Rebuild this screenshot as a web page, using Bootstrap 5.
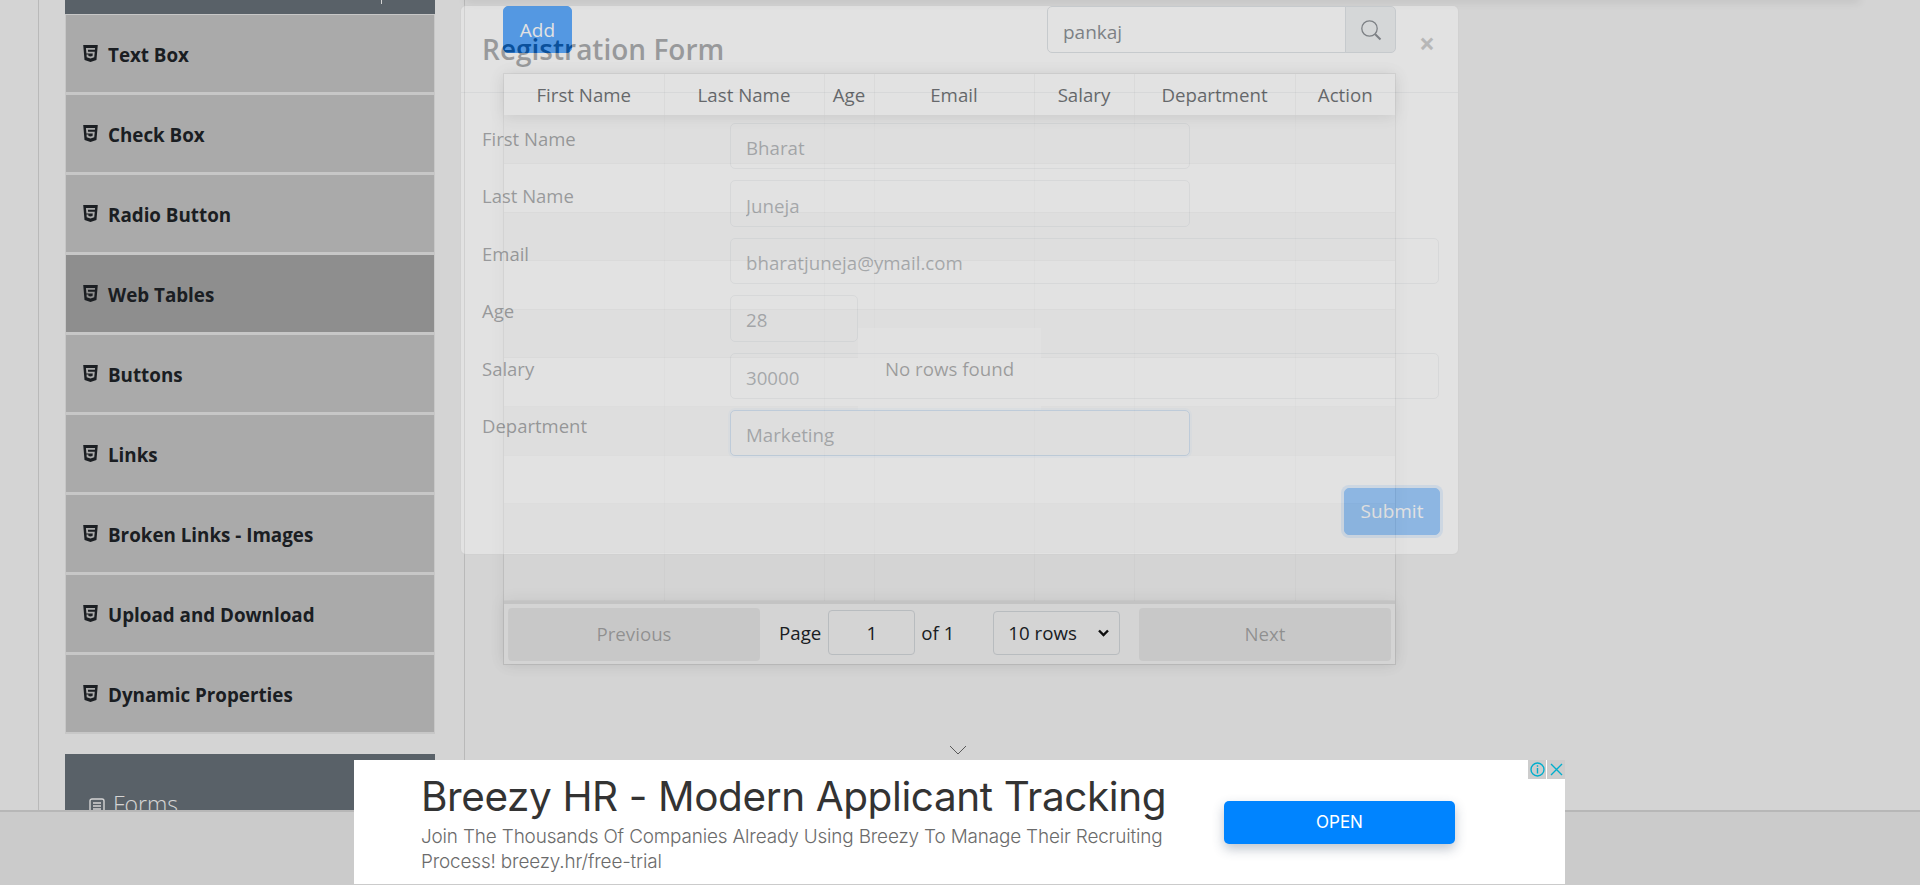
<!DOCTYPE html>
<html lang="en">
<head>
<meta charset="utf-8">
<title>Web Tables</title>
<link rel="stylesheet" href="https://cdn.jsdelivr.net/npm/bootstrap@5.3.0/dist/css/bootstrap.min.css">
<style>
html,body{height:885px;overflow:hidden}
body{font-family:"Open Sans","Noto Sans",sans-serif;font-size:18px;color:#212529;background:#fff;position:relative}
.shell{height:885px;display:flex;flex-direction:column}
.work{height:810px;overflow:hidden;display:flex;flex:none}
.side{width:427px;margin-left:38px;border-left:1px solid #dfdfdf;border-right:1px solid #dfdfdf;padding:0 29px 0 26px;flex:none}
.grp-dark{background:#6c757d;color:#fff}
.grp-top{height:14px;position:relative}
.grp-tick{position:absolute;left:316px;top:0;width:1px;height:4px;background:#fff}
.menu-item{height:80px;background:#cdcdcd;border:1px solid #f0f0f0;border-bottom-width:2px;font-weight:700;font-size:18.8px;color:#212529;display:flex;align-items:center;padding:4px 0 0 17px;gap:10px;line-height:1}
.menu-item.on{background:#ababab}
.menu-item svg{width:15px;height:17px;fill:#212529;margin-top:-4px;flex:none}
.grp-forms{margin-top:20px;height:80px;padding:30px 0 0 24px;font-size:23px;font-weight:300;line-height:40px;display:flex;gap:8px;align-items:flex-start}
.grp-forms svg{margin-top:14px;flex:none}
.main{flex:1;padding:6px 0 0 38px;position:relative}
.top-shade{position:absolute;left:0;top:-10px;width:1395px;height:10px;box-shadow:0 3px 8px rgba(0,0,0,.08)}
.top-row{width:893px;height:47px;display:flex;justify-content:space-between;align-items:flex-start}
.add-btn{width:69px;height:47px;font-size:19px;padding:2px 0 0;background:#007bff;border-color:#007bff;line-height:1;border-radius:5px}
.find{width:349px;height:47px}
.find .form-control{height:47px;font-size:19px;padding:4px 0 0 15px;color:#495057;border-color:#ced4da;border-radius:5px 0 0 5px}
.find .input-group-text{width:51px;background:#e9ecef;border-color:#ced4da;justify-content:center;padding:0;border-radius:0 5px 5px 0}
.grid-wrap{width:893px;margin-top:20px;border:1px solid rgba(0,0,0,.1);position:relative;box-shadow:0 0 15px rgba(0,0,0,.05)}
.grid{table-layout:fixed;margin:0;width:100%;border-collapse:collapse;--bs-table-bg:transparent}
.grid th{height:41px;font-weight:400;font-size:18.7px;text-align:center;padding:2px 0 0;border:0;border-right:1px solid rgba(0,0,0,.05);vertical-align:middle;color:#212529;line-height:1}
.grid th:last-child,.grid td:last-child{border-right:0}
.grid thead{box-shadow:0 2px 15px rgba(0,0,0,.15);position:relative}
.grid td{height:48.6px;padding:0;border:0;border-right:1px solid rgba(0,0,0,.025);border-bottom:1px solid rgba(0,0,0,.03)}
.grid tbody tr:nth-child(odd) td{background:rgba(0,0,0,.025)}
.empty-note{position:absolute;left:354px;top:254px;width:183px;height:82px;background:rgba(255,255,255,.8);display:flex;align-items:center;justify-content:center;font-size:18.7px;color:rgba(0,0,0,.5)}
.pager{height:63px;border-top:3px solid rgba(0,0,0,.08);padding:3px 4px;display:flex;align-items:center;box-shadow:0 0 15px rgba(0,0,0,.08)}
.pg-btn,.pg-btn:disabled{width:252px;height:53px;background:rgba(0,0,0,.1);color:rgba(0,0,0,.6);opacity:.5;border:0;font-size:18.7px;border-radius:4px;padding:0;flex:none}
.pg-mid{flex:1;display:flex;align-items:center;font-size:18.7px;padding-left:19px;margin-top:-3px}
.pg-num{width:87px;height:45px;text-align:center;font-size:18.7px;margin:0 6px 0 7px;padding:0;border-radius:4px;background:transparent}
.pg-sel{width:127px;height:44px;margin-left:39px;font-size:18.7px;padding:0 0 0 14px;border-radius:4px;background-color:transparent;background-size:13px 10px;background-position:right 9px center;background-image:url("data:image/svg+xml,%3csvg xmlns='http://www.w3.org/2000/svg' viewBox='0 0 13 10'%3e%3cpath fill='none' stroke='%23111' stroke-width='2.4' d='M2 2.5l4.5 4.5 4.5-4.5'/%3e%3c/svg%3e")}
.chev{width:892px;padding-left:18px;margin-top:80px;display:flex;justify-content:center;line-height:1}
.foot{height:75px;background:#f5f5f5;border-top:2px solid #dcdcdc;flex:none}
.veil{position:absolute;inset:0;background:rgba(0,0,0,.17);z-index:10}
.dlg{position:absolute;left:460px;top:5px;width:999px;z-index:20;opacity:.33}
.dlg .modal-content{height:550px;background:#fff;border-radius:6px;border:1px solid rgba(0,0,0,.2)}
.dlg .modal-header{height:87px;padding:0 20px 0 21px;align-items:center;border-bottom:1px solid #dee2e6}
.dlg .modal-title{font-size:28px;font-weight:600;line-height:1;margin-top:-1px;color:#212529}
.dlg-x{border:0;background:none;font-size:28px;font-weight:700;color:#000;opacity:.5;padding:0 3px 0 0;line-height:1;margin:-13px 0 0}
.dlg .modal-body{padding:30px 19px 0 21px;flex:none}
.frow{display:flex;height:46.4px;margin-bottom:11px}
.flabel{width:248px;flex:none;font-size:18.5px;line-height:1;padding-top:7px;margin:0;font-weight:400}
.dlg .form-control{height:46.4px;font-size:18.7px;padding:3px 15px 0;border-radius:5px;color:#495057}
.w-short{width:460px}.w-tiny{width:128px}.w-full{width:709px}
.dlg .form-control.foc{border-color:#9cc4ee;box-shadow:0 0 0 2px rgba(0,123,255,.08)}
.dlg .sub-btn{position:absolute;left:883px;top:482px;width:96px;height:47px;font-size:19px;padding:0;background:#007bff;border-color:#007bff;border-radius:5px;box-shadow:0 0 0 3px rgba(0,123,255,.25)}
.ad{position:absolute;left:354px;top:760px;width:1211px;height:124px;background:#fff;z-index:30;display:flex;padding-left:67px;font-family:Roboto,"Open Sans",sans-serif}
.ad-txt{width:803px;flex:none}
.ad-title{font-size:40.5px;color:#333;line-height:1;margin:17px 0 0;font-weight:400;font-family:Inter,Roboto,sans-serif;letter-spacing:-.4px;white-space:nowrap}
.ad-sub{font-size:18.9px;color:#6b6b6b;line-height:25px;margin:6px 0 0;font-weight:300;font-family:Inter,Roboto,sans-serif;letter-spacing:-.15px;white-space:nowrap}
.ad-open{width:231px;height:43px;margin-top:41px;background:#0084ff;border:0;color:#fff;font-size:17px;border-radius:5px;padding:0;box-shadow:0 5px 12px rgba(40,60,90,.3);font-family:Inter,Roboto,sans-serif}
.adch{position:absolute;right:0;top:0;display:flex;gap:1px}
.adch span{width:18px;height:19px;background:#cdcdcd;display:flex;align-items:center;justify-content:center}
</style>
</head>
<body>
<div class="shell">
  <div class="work">
    <aside class="side">
      <div class="grp-dark grp-top"><span class="grp-tick"></span></div>
      <div class="menu-item"><svg viewBox="0 32 384 448"><path d="M0 32l34.9 395.8L191.5 480l157.6-52.2L384 32H0zm308.2 127.9H124.4l4.1 49.4h175.6l-13.6 148.4-97.9 27v.3h-1.1l-98.7-27.3-6-75.8h47.7L138 320l53.5 14.5 53.7-14.5 6-62.2H84.3L71.5 112.2h241.1l-4.4 47.7z"/></svg>Text Box</div>
      <div class="menu-item"><svg viewBox="0 32 384 448"><path d="M0 32l34.9 395.8L191.5 480l157.6-52.2L384 32H0zm308.2 127.9H124.4l4.1 49.4h175.6l-13.6 148.4-97.9 27v.3h-1.1l-98.7-27.3-6-75.8h47.7L138 320l53.5 14.5 53.7-14.5 6-62.2H84.3L71.5 112.2h241.1l-4.4 47.7z"/></svg>Check Box</div>
      <div class="menu-item"><svg viewBox="0 32 384 448"><path d="M0 32l34.9 395.8L191.5 480l157.6-52.2L384 32H0zm308.2 127.9H124.4l4.1 49.4h175.6l-13.6 148.4-97.9 27v.3h-1.1l-98.7-27.3-6-75.8h47.7L138 320l53.5 14.5 53.7-14.5 6-62.2H84.3L71.5 112.2h241.1l-4.4 47.7z"/></svg>Radio Button</div>
      <div class="menu-item on"><svg viewBox="0 32 384 448"><path d="M0 32l34.9 395.8L191.5 480l157.6-52.2L384 32H0zm308.2 127.9H124.4l4.1 49.4h175.6l-13.6 148.4-97.9 27v.3h-1.1l-98.7-27.3-6-75.8h47.7L138 320l53.5 14.5 53.7-14.5 6-62.2H84.3L71.5 112.2h241.1l-4.4 47.7z"/></svg>Web Tables</div>
      <div class="menu-item"><svg viewBox="0 32 384 448"><path d="M0 32l34.9 395.8L191.5 480l157.6-52.2L384 32H0zm308.2 127.9H124.4l4.1 49.4h175.6l-13.6 148.4-97.9 27v.3h-1.1l-98.7-27.3-6-75.8h47.7L138 320l53.5 14.5 53.7-14.5 6-62.2H84.3L71.5 112.2h241.1l-4.4 47.7z"/></svg>Buttons</div>
      <div class="menu-item"><svg viewBox="0 32 384 448"><path d="M0 32l34.9 395.8L191.5 480l157.6-52.2L384 32H0zm308.2 127.9H124.4l4.1 49.4h175.6l-13.6 148.4-97.9 27v.3h-1.1l-98.7-27.3-6-75.8h47.7L138 320l53.5 14.5 53.7-14.5 6-62.2H84.3L71.5 112.2h241.1l-4.4 47.7z"/></svg>Links</div>
      <div class="menu-item"><svg viewBox="0 32 384 448"><path d="M0 32l34.9 395.8L191.5 480l157.6-52.2L384 32H0zm308.2 127.9H124.4l4.1 49.4h175.6l-13.6 148.4-97.9 27v.3h-1.1l-98.7-27.3-6-75.8h47.7L138 320l53.5 14.5 53.7-14.5 6-62.2H84.3L71.5 112.2h241.1l-4.4 47.7z"/></svg>Broken Links - Images</div>
      <div class="menu-item"><svg viewBox="0 32 384 448"><path d="M0 32l34.9 395.8L191.5 480l157.6-52.2L384 32H0zm308.2 127.9H124.4l4.1 49.4h175.6l-13.6 148.4-97.9 27v.3h-1.1l-98.7-27.3-6-75.8h47.7L138 320l53.5 14.5 53.7-14.5 6-62.2H84.3L71.5 112.2h241.1l-4.4 47.7z"/></svg>Upload and Download</div>
      <div class="menu-item"><svg viewBox="0 32 384 448"><path d="M0 32l34.9 395.8L191.5 480l157.6-52.2L384 32H0zm308.2 127.9H124.4l4.1 49.4h175.6l-13.6 148.4-97.9 27v.3h-1.1l-98.7-27.3-6-75.8h47.7L138 320l53.5 14.5 53.7-14.5 6-62.2H84.3L71.5 112.2h241.1l-4.4 47.7z"/></svg>Dynamic Properties</div>
      <div class="grp-dark grp-forms"><svg width="16" height="17" viewBox="0 0 16 17" fill="none" stroke="#fff" stroke-width="1.4"><rect x="1" y="1" width="14" height="15" rx="2"/><path d="M4 5h8M4 8h8M4 11h8M4 14h8"/></svg>Forms</div>
    </aside>
    <main class="main">
      <div class="top-shade"></div>
      <div class="top-row">
        <button type="button" class="btn btn-primary add-btn">Add</button>
        <div class="input-group find">
          <input class="form-control" type="text" value="pankaj">
          <span class="input-group-text"><svg width="22" height="22" viewBox="0 0 22 22" fill="none" stroke="#495057"><circle cx="9.5" cy="9.5" r="7.7" stroke-width="1.3"/><path d="M15.2 15.2l5.3 5.3" stroke-width="2"/></svg></span>
        </div>
      </div>
      <div class="grid-wrap">
        <table class="table grid">
          <colgroup><col style="width:160px"><col style="width:160px"><col style="width:50px"><col style="width:160px"><col style="width:100px"><col style="width:161px"><col style="width:100px"></colgroup>
          <thead><tr><th>First Name</th><th>Last Name</th><th>Age</th><th>Email</th><th>Salary</th><th>Department</th><th>Action</th></tr></thead>
          <tbody>
            <tr><td></td><td></td><td></td><td></td><td></td><td></td><td></td></tr>
            <tr><td></td><td></td><td></td><td></td><td></td><td></td><td></td></tr>
            <tr><td></td><td></td><td></td><td></td><td></td><td></td><td></td></tr>
            <tr><td></td><td></td><td></td><td></td><td></td><td></td><td></td></tr>
            <tr><td></td><td></td><td></td><td></td><td></td><td></td><td></td></tr>
            <tr><td></td><td></td><td></td><td></td><td></td><td></td><td></td></tr>
            <tr><td></td><td></td><td></td><td></td><td></td><td></td><td></td></tr>
            <tr><td></td><td></td><td></td><td></td><td></td><td></td><td></td></tr>
            <tr><td></td><td></td><td></td><td></td><td></td><td></td><td></td></tr>
            <tr><td></td><td></td><td></td><td></td><td></td><td></td><td></td></tr>
          </tbody>
        </table>
        <div class="empty-note">No rows found</div>
        <div class="pager">
          <button type="button" class="btn pg-btn" disabled>Previous</button>
          <div class="pg-mid">Page <input class="form-control pg-num" type="text" value="1"> of 1
            <select class="form-select pg-sel"><option>10 rows</option></select>
          </div>
          <button type="button" class="btn pg-btn" disabled>Next</button>
        </div>
      </div>
      <div class="chev"><svg width="18" height="10" viewBox="0 0 18 10" fill="none" stroke="#6c6c6c" stroke-width="1"><path d="M1 1l8 8 8-8"/></svg></div>
    </main>
  </div>
  <footer class="foot"></footer>
</div>

<div class="veil"></div>

<div class="dlg">
  <div class="modal-content">
    <div class="modal-header">
      <h4 class="modal-title">Registration Form</h4>
      <button type="button" class="dlg-x ms-auto" aria-label="Close">×</button>
    </div>
    <div class="modal-body">
      <div class="frow"><label class="flabel">First Name</label><input class="form-control w-short" value="Bharat"></div>
      <div class="frow"><label class="flabel">Last Name</label><input class="form-control w-short" value="Juneja"></div>
      <div class="frow"><label class="flabel">Email</label><input class="form-control w-full" value="bharatjuneja@ymail.com"></div>
      <div class="frow"><label class="flabel">Age</label><input class="form-control w-tiny" value="28"></div>
      <div class="frow"><label class="flabel">Salary</label><input class="form-control w-full" value="30000"></div>
      <div class="frow"><label class="flabel">Department</label><input class="form-control w-short foc" value="Marketing"></div>
    </div>
    <button type="button" class="btn btn-primary sub-btn">Submit</button>
  </div>
</div>

<div class="ad">
  <div class="ad-txt">
    <p class="ad-title">Breezy HR - Modern Applicant Tracking</p>
    <p class="ad-sub">Join The Thousands Of Companies Already Using Breezy To Manage Their Recruiting<br>Process! breezy.hr/free-trial</p>
  </div>
  <button type="button" class="btn ad-open">OPEN</button>
  <div class="adch">
    <span><svg width="15" height="15" viewBox="0 0 15 15" fill="none" stroke="#00aecd" stroke-width="1.4"><circle cx="7.5" cy="7.5" r="6.5"/><path d="M7.5 6v5.5M7.5 3.2v1.6"/></svg></span>
    <span><svg width="13" height="13" viewBox="0 0 13 13" fill="none" stroke="#00aecd" stroke-width="1.4"><path d="M1 1l11 11M12 1L1 12"/></svg></span>
  </div>
</div>

<script src="https://cdn.jsdelivr.net/npm/bootstrap@5.3.0/dist/js/bootstrap.bundle.min.js"></script>
</body>
</html>
